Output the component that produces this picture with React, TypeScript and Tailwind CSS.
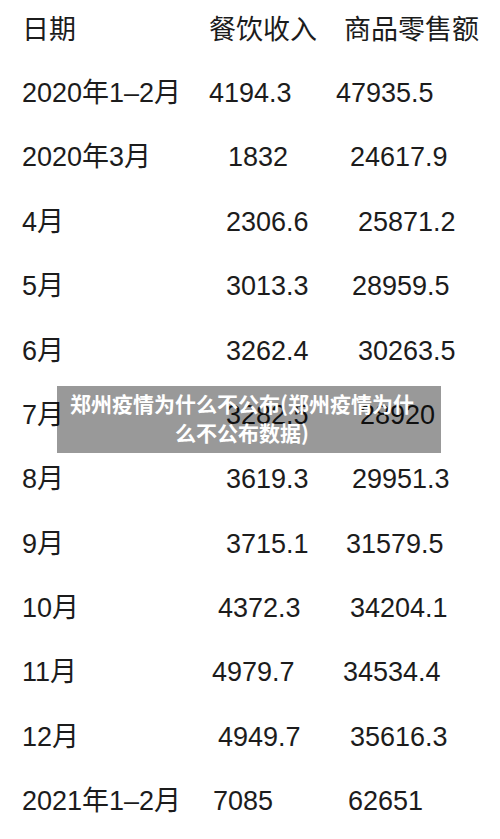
const rows = [
  { d: "2020年1–2月", a: "4194.3", b: "47935.5", w1: "w-[209px]", w2: "w-[127px]" },
  { d: "2020年3月", a: "1832", b: "24617.9", w1: "w-[228px]", w2: "w-[122px]" },
  { d: "4月", a: "2306.6", b: "25871.2", w1: "w-[226px]", w2: "w-[132px]" },
  { d: "5月", a: "3013.3", b: "28959.5", w1: "w-[226px]", w2: "w-[126px]" },
  { d: "6月", a: "3262.4", b: "30263.5", w1: "w-[226px]", w2: "w-[132px]" },
  { d: "7月", a: "3282.5", b: "28920", w1: "w-[226px]", w2: "w-[134px]" },
  { d: "8月", a: "3619.3", b: "29951.3", w1: "w-[226px]", w2: "w-[126px]" },
  { d: "9月", a: "3715.1", b: "31579.5", w1: "w-[226px]", w2: "w-[120px]" },
  { d: "10月", a: "4372.3", b: "34204.1", w1: "w-[218px]", w2: "w-[132px]" },
  { d: "11月", a: "4979.7", b: "34534.4", w1: "w-[212px]", w2: "w-[131px]" },
  { d: "12月", a: "4949.7", b: "35616.3", w1: "w-[218px]", w2: "w-[132px]" },
  { d: "2021年1–2月", a: "7085", b: "62651", w1: "w-[213px]", w2: "w-[135px]" },
];

export default function App() {
  return (
    <div className="relative w-[500px] h-[839px] overflow-hidden bg-white text-[#1c1c1c] font-['Liberation_Sans','Noto_Sans_CJK_SC',sans-serif] text-[27px]">
      {/* header */}
      <div className="flex items-center h-[61px]">
        <span className="w-[209px] pl-[22px] shrink-0">日期</span>
        <span className="w-[135px] shrink-0">餐饮收入</span>
        <span>商品零售额</span>
      </div>

      {rows.map((r, i) => (
        <div key={i} className="flex items-center h-[64.4px] whitespace-nowrap">
          <span className={`${r.w1} pl-[22px] shrink-0`}>{r.d}</span>
          <span className={`${r.w2} shrink-0`}>{r.a}</span>
          <span>{r.b}</span>
        </div>
      ))}

      {/* title overlay */}
      <div className="absolute left-[57px] top-[386px] w-[384px] h-[67px] bg-black/40 flex items-center justify-center pl-[10px] pr-[24px] pb-[3px]">
        <p className="text-white font-bold text-[21px] leading-[29px] text-center font-['Noto_Sans_CJK_SC',sans-serif]">
          郑州疫情为什么不公布(郑州疫情为什么不公布数据)
        </p>
      </div>
    </div>
  );
}
